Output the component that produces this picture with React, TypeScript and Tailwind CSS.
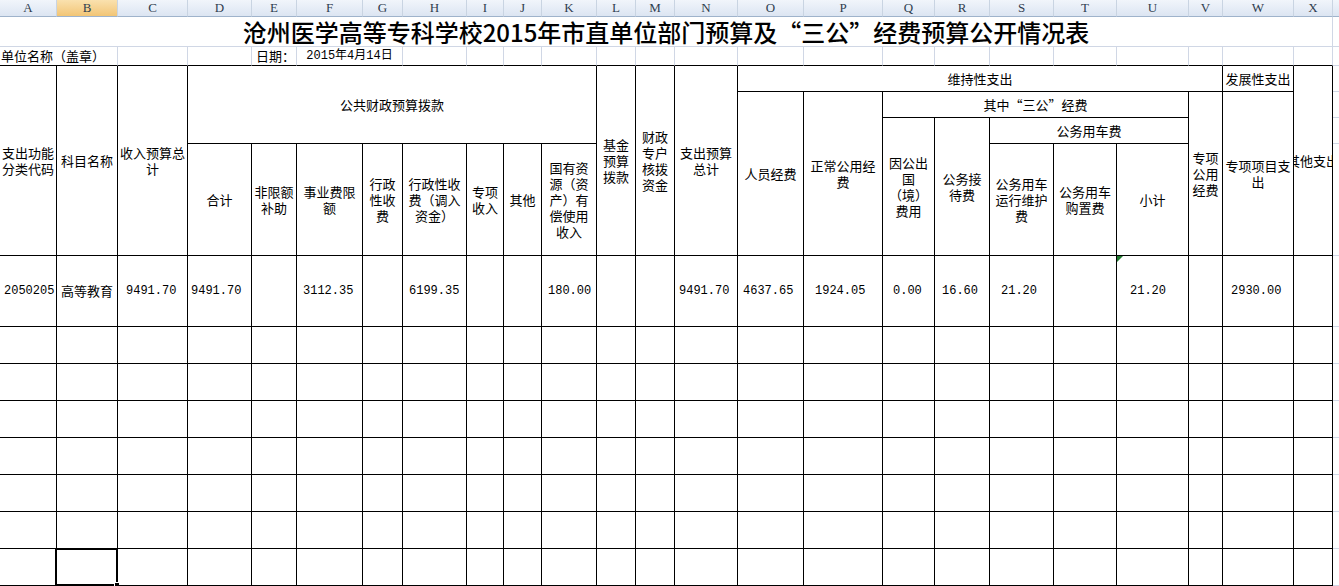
import React from "react";

const COLS =
  "grid grid-cols-[57px_61px_70px_64px_45px_66px_40px_64px_37px_38px_55px_39px_39px_63px_66px_79px_52px_55px_64px_63px_72px_34px_71px_39px_6px]";

const CJK = "font-['Noto_Sans_CJK_SC',sans-serif]";
const MONO = "font-['Liberation_Mono','Noto_Sans_CJK_SC',monospace]";

const letters = "ABCDEFGHIJKLMNOPQRSTUVWX".split("");

const headCells = [
  { pos: "col-start-1 row-start-1 row-span-4", lines: ["支出功能", "分类代码"] },
  { pos: "col-start-2 row-start-1 row-span-4", lines: ["科目名称"] },
  { pos: "col-start-3 row-start-1 row-span-4", lines: ["收入预算总", "计"] },
  { pos: "col-start-4 col-span-8 row-start-1 row-span-3", lines: ["公共财政预算拨款"] },
  { pos: "col-start-12 row-start-1 row-span-4", lines: ["基金", "预算", "拨款"] },
  { pos: "col-start-13 row-start-1 row-span-4", lines: ["财政", "专户", "核拨", "资金"] },
  { pos: "col-start-14 row-start-1 row-span-4", lines: ["支出预算", "总计"] },
  { pos: "col-start-15 col-span-8 row-start-1", lines: ["维持性支出"] },
  { pos: "col-start-23 row-start-1", lines: ["发展性支出"] },
  { pos: "col-start-24 row-start-1 row-span-4 whitespace-nowrap", lines: ["其他支出"] },
  { pos: "col-start-15 row-start-2 row-span-3", lines: ["人员经费"] },
  { pos: "col-start-16 row-start-2 row-span-3", lines: ["正常公用经", "费"] },
  { pos: "col-start-17 col-span-5 row-start-2", lines: ["其中“三公”经费"] },
  { pos: "col-start-22 row-start-2 row-span-3", lines: ["专项", "公用", "经费"] },
  { pos: "col-start-23 row-start-2 row-span-3", lines: ["专项项目支", "出"] },
  { pos: "col-start-17 row-start-3 row-span-2", lines: ["因公出", "国", "（境）", "费用"] },
  { pos: "col-start-18 row-start-3 row-span-2", lines: ["公务接", "待费"] },
  { pos: "col-start-19 col-span-3 row-start-3", lines: ["公务用车费"] },
  { pos: "col-start-4 row-start-4", lines: ["合计"] },
  { pos: "col-start-5 row-start-4", lines: ["非限额", "补助"] },
  { pos: "col-start-6 row-start-4", lines: ["事业费限", "额"] },
  { pos: "col-start-7 row-start-4", lines: ["行政", "性收", "费"] },
  { pos: "col-start-8 row-start-4", lines: ["行政性收", "费（调入", "资金）"] },
  { pos: "col-start-9 row-start-4", lines: ["专项", "收入"] },
  { pos: "col-start-10 row-start-4", lines: ["其他"] },
  { pos: "col-start-11 row-start-4", lines: ["国有资", "源（资", "产）有", "偿使用", "收入"] },
  { pos: "col-start-19 row-start-4", lines: ["公务用车", "运行维护", "费"] },
  { pos: "col-start-20 row-start-4", lines: ["公务用车", "购置费"] },
  { pos: "col-start-21 row-start-4", lines: ["小计"] },
];

const sideCells = [
  "col-start-25 row-start-1",
  "col-start-25 row-start-2",
  "col-start-25 row-start-3",
  "col-start-25 row-start-4",
];

const dataRow = [
  { v: "2050205", cls: `pl-[4px] ${MONO}` },
  { v: "高等教育", cls: `pl-[4px] ${CJK}` },
  { v: "9491.70", cls: `pl-[8px] ${MONO}` },
  { v: "9491.70", cls: `pl-[3px] ${MONO}` },
  { v: "" },
  { v: "3112.35", cls: `pl-[6px] ${MONO}` },
  { v: "" },
  { v: "6199.35", cls: `pl-[6px] ${MONO}` },
  { v: "" },
  { v: "" },
  { v: "180.00", cls: `pl-[6px] ${MONO}` },
  { v: "" },
  { v: "" },
  { v: "9491.70", cls: `pl-[4px] ${MONO}` },
  { v: "4637.65", cls: `pl-[5px] ${MONO}` },
  { v: "1924.05", cls: `pl-[11px] ${MONO}` },
  { v: "0.00", cls: `pl-[10px] ${MONO}` },
  { v: "16.60", cls: `pl-[7px] ${MONO}` },
  { v: "21.20", cls: `pl-[11px] ${MONO}` },
  { v: "" },
  { v: "21.20", cls: `pl-[13px] ${MONO}`, flag: true },
  { v: "" },
  { v: "2930.00", cls: `pl-[8px] ${MONO}` },
  { v: "" },
];

const App = () => {
  return (
    <div className="w-[1339px] h-[586px] overflow-hidden bg-white text-black">
      {/* column letters */}
      <div className={COLS}>
        {letters.map((l) => (
          <div
            key={l}
            className={`h-[17px] flex items-center justify-center border-r border-b border-r-[#c9d4e2] border-b-[#9fb3cb] bg-linear-to-b font-['Liberation_Serif',serif] text-[13px] text-[#2f3d4f] ${
              l === "B" ? "from-[#fae1ae] to-[#f2c575]" : "from-[#f1f5fb] to-[#dce5f2]"
            }`}
          >
            {l}
          </div>
        ))}
        <div className="h-[17px] border-b border-b-[#9fb3cb] bg-linear-to-b from-[#f1f5fb] to-[#dce5f2]" />
      </div>

      {/* title */}
      <div className={COLS}>
        <div
          className={`col-span-24 h-[30px] flex items-center justify-center border-r border-b border-[#d0d7e5] text-[24px] font-medium leading-none ${CJK}`}
        >
          沧州医学高等专科学校2015年市直单位部门预算及“三公”经费预算公开情况表
        </div>
        <div className="h-[30px] border-b border-[#d0d7e5]" />
      </div>

      {/* unit / date row */}
      <div className={`${COLS} text-[13px]`}>
        <div className={`col-span-2 h-[19px] flex items-center pl-[1px] whitespace-nowrap border-r border-r-[#d0d7e5] border-b border-b-black ${CJK}`}>
          单位名称（盖章）
        </div>
        <div className="h-[19px] border-r border-r-[#d0d7e5] border-b border-b-black" />
        <div className="h-[19px] border-r border-r-[#d0d7e5] border-b border-b-black" />
        <div className={`h-[19px] flex items-center pl-[4px] border-r border-r-[#d0d7e5] border-b border-b-black ${CJK}`}>
          日期：
        </div>
        <div className={`col-span-2 h-[19px] flex items-center justify-center whitespace-nowrap text-[12px] border-r border-r-[#d0d7e5] border-b border-b-black ${MONO}`}>
          2015年4月14日
        </div>
        {Array.from({ length: 17 }).map((_, i) => (
          <div key={i} className="h-[19px] border-r border-r-[#d0d7e5] border-b border-b-black" />
        ))}
        <div className="h-[19px] border-b border-b-[#d0d7e5]" />
      </div>

      {/* table header */}
      <div className={`${COLS} grid-rows-[26px_26px_26px_112px] text-[13px] leading-[16px] ${CJK}`}>
        {headCells.map((c, i) => (
          <div
            key={i}
            className={`${c.pos} flex items-center justify-center text-center overflow-hidden border-r border-b border-black`}
          >
            <span>
              {c.lines.map((t, j) => (
                <React.Fragment key={j}>
                  {j > 0 && <br />}
                  {t}
                </React.Fragment>
              ))}
            </span>
          </div>
        ))}
        {sideCells.map((p) => (
          <div key={p} className={`${p} border-b border-[#d0d7e5]`} />
        ))}
      </div>

      {/* data row */}
      <div className={`${COLS} text-[12px]`}>
        {dataRow.map((d, i) => (
          <div
            key={i}
            className={`relative h-[71px] flex items-center whitespace-nowrap border-r border-b border-black ${d.cls ?? ""} ${
              i === 1 ? "text-[13px]" : ""
            }`}
          >
            {d.flag && (
              <span className="absolute top-0 left-0 w-0 h-0 border-t-[6px] border-r-[6px] border-t-[#1f7a2e] border-r-transparent" />
            )}
            {d.v}
          </div>
        ))}
        <div className="h-[71px] border-b border-[#d0d7e5]" />
      </div>

      {/* empty rows */}
      {Array.from({ length: 7 }).map((_, r) => (
        <div key={r} className={COLS}>
          {letters.map((l) => (
            <div key={l} className="relative h-[37px] border-r border-b border-black">
              {r === 6 && l === "B" && (
                <>
                  <span className="absolute -top-px -left-[2px] -right-px -bottom-px border-2 border-black" />
                  <span className="absolute -bottom-[3px] -right-[3px] w-[6px] h-[6px] bg-black border border-white" />
                </>
              )}
            </div>
          ))}
          <div className="h-[37px] border-b border-[#d0d7e5]" />
        </div>
      ))}
    </div>
  );
};

export default App;
